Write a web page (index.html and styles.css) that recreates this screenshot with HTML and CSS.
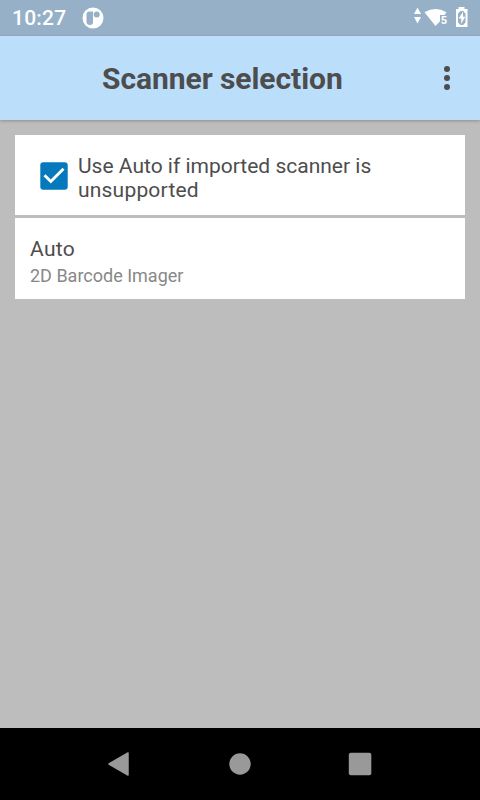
FILE: index.html
```html
<!DOCTYPE html>
<html lang="en">
<head>
<meta charset="utf-8">
<title>Scanner selection</title>
<link rel="stylesheet" href="styles.css">
</head>
<body>
<div class="status">
  <span class="clock">10:27</span>
  <svg class="notice" width="22" height="22" viewBox="0 0 22 22"><circle cx="11" cy="11" r="10.500" fill="#fff"/><path d="M7.500 4.500H11V15q0 3-3 3-3.500 0-3.500-3V7.500q0-3 3-3z" fill="#96b0c7"/><circle cx="14.700" cy="7.500" r="3" fill="#96b0c7"/></svg>
  <svg class="signals" width="58" height="22" viewBox="0 0 58 22"><g fill="#fff"><path d="M3.500 1.500 7 8H0zM0 11h7l-3.500 6.500zM10.500 6.300Q21.500-.5 32.500 6.300L30.500 9H26v6.300L21.500 20z"/><path fill-rule="evenodd" d="M44.500 3V1h6v2H53.500V21H42V3zM46.500 5 44 7.500v9L46.500 19H49l2.500-2.500v-9L49 5z"/><path d="M49 5.800 44.700 12.500h2.500V18l4-7.200h-2.200z"/></g><text class="band" x="26.800" y="18.300">5</text></svg>
</div>
<header class="appbar">
  <h1>Scanner selection</h1>
  <svg class="more" width="6" height="26" viewBox="0 0 6 26" fill="#4d4d4d"><circle cx="3" cy="4" r="3"/><circle cx="3" cy="13" r="3"/><circle cx="3" cy="22" r="3"/></svg>
</header>
<main class="content">
  <label class="card option">
    <svg class="check" width="28" height="28" viewBox="0 0 28 28"><rect x=".3" y=".3" width="27.400" height="27.400" rx="3" fill="#0679bc"/><path d="m4.500 13.300 6.300 6.200L23.500 6.700" fill="none" stroke="#fff" stroke-width="2.900"/></svg>
    <span class="label">Use Auto if imported scanner is <span class="wide">unsupported</span></span>
  </label>
  <div class="card scanner">
    <div class="name">Auto</div>
    <div class="detail">2D Barcode Imager</div>
  </div>
</main>
<nav class="navbar">
  <svg width="24" height="26" viewBox="0 0 24 26"><path d="M2 13 21 2v22z" fill="#999" stroke="#999" stroke-width="1.500" stroke-linejoin="round"/></svg>
  <svg width="24" height="26" viewBox="0 0 24 26"><circle cx="12" cy="13" r="10.700" fill="#999"/></svg>
  <svg width="24" height="26" viewBox="0 0 24 26"><rect x=".8" y="1.700" width="22.500" height="22.500" rx="2" fill="#999"/></svg>
</nav>
</body>
</html>
```
FILE: styles.css
```css
* { box-sizing: border-box; }
body {
  margin: 0;
  width: 480px;
  height: 800px;
  display: flex;
  flex-direction: column;
  overflow: hidden;
  background: #bdbdbd;
  color: #4d4d4d;
  font-family: Roboto, sans-serif;
}
svg { display: block; flex: none; }
.status {
  height: 36px;
  display: flex;
  align-items: center;
  padding: 0 8px 0 12px;
  background: #96b0c7;
}
.clock {
  width: 70px;
  color: #fff;
  font-size: 21px;
  font-weight: 500;
  letter-spacing: .2px;
  line-height: 36px;
}
.signals { margin: 0 0 2px auto; }
.band { fill: #fff; font: 700 11px Roboto, sans-serif; }
.appbar {
  height: 84px;
  display: flex;
  align-items: center;
  padding: 0 30px 0 102px;
  background: #bbdefb;
  box-shadow: 0 1px 3px rgba(0, 0, 0, .25);
}
h1 {
  margin: 1px 0 0;
  font-size: 30px;
  font-weight: 700;
  letter-spacing: -.06px;
  line-height: 36px;
  white-space: nowrap;
}
.more { margin-left: auto; }
.content {
  flex: 1;
  display: flex;
  flex-direction: column;
  gap: 3px;
  padding: 15px;
}
.card { background: #fff; }
.option {
  height: 80px;
  display: flex;
  align-items: center;
  gap: 10px;
  padding: 5px 24px 0 25px;
}
.check { margin-bottom: 3px; }
.label {
  width: 310px;
  font-size: 21px;
  line-height: 24px;
}
.wide { letter-spacing: .2px; }
.scanner { height: 81px; padding: 19px 15px; }
.name { font-size: 21px; letter-spacing: .3px; line-height: 24px; }
.detail {
  margin-top: 4px;
  color: #888;
  font-size: 18px;
  line-height: 21px;
}
.navbar {
  height: 72px;
  display: flex;
  align-items: center;
  justify-content: space-between;
  padding: 0 108px 0 107px;
  background: #000;
}
```
